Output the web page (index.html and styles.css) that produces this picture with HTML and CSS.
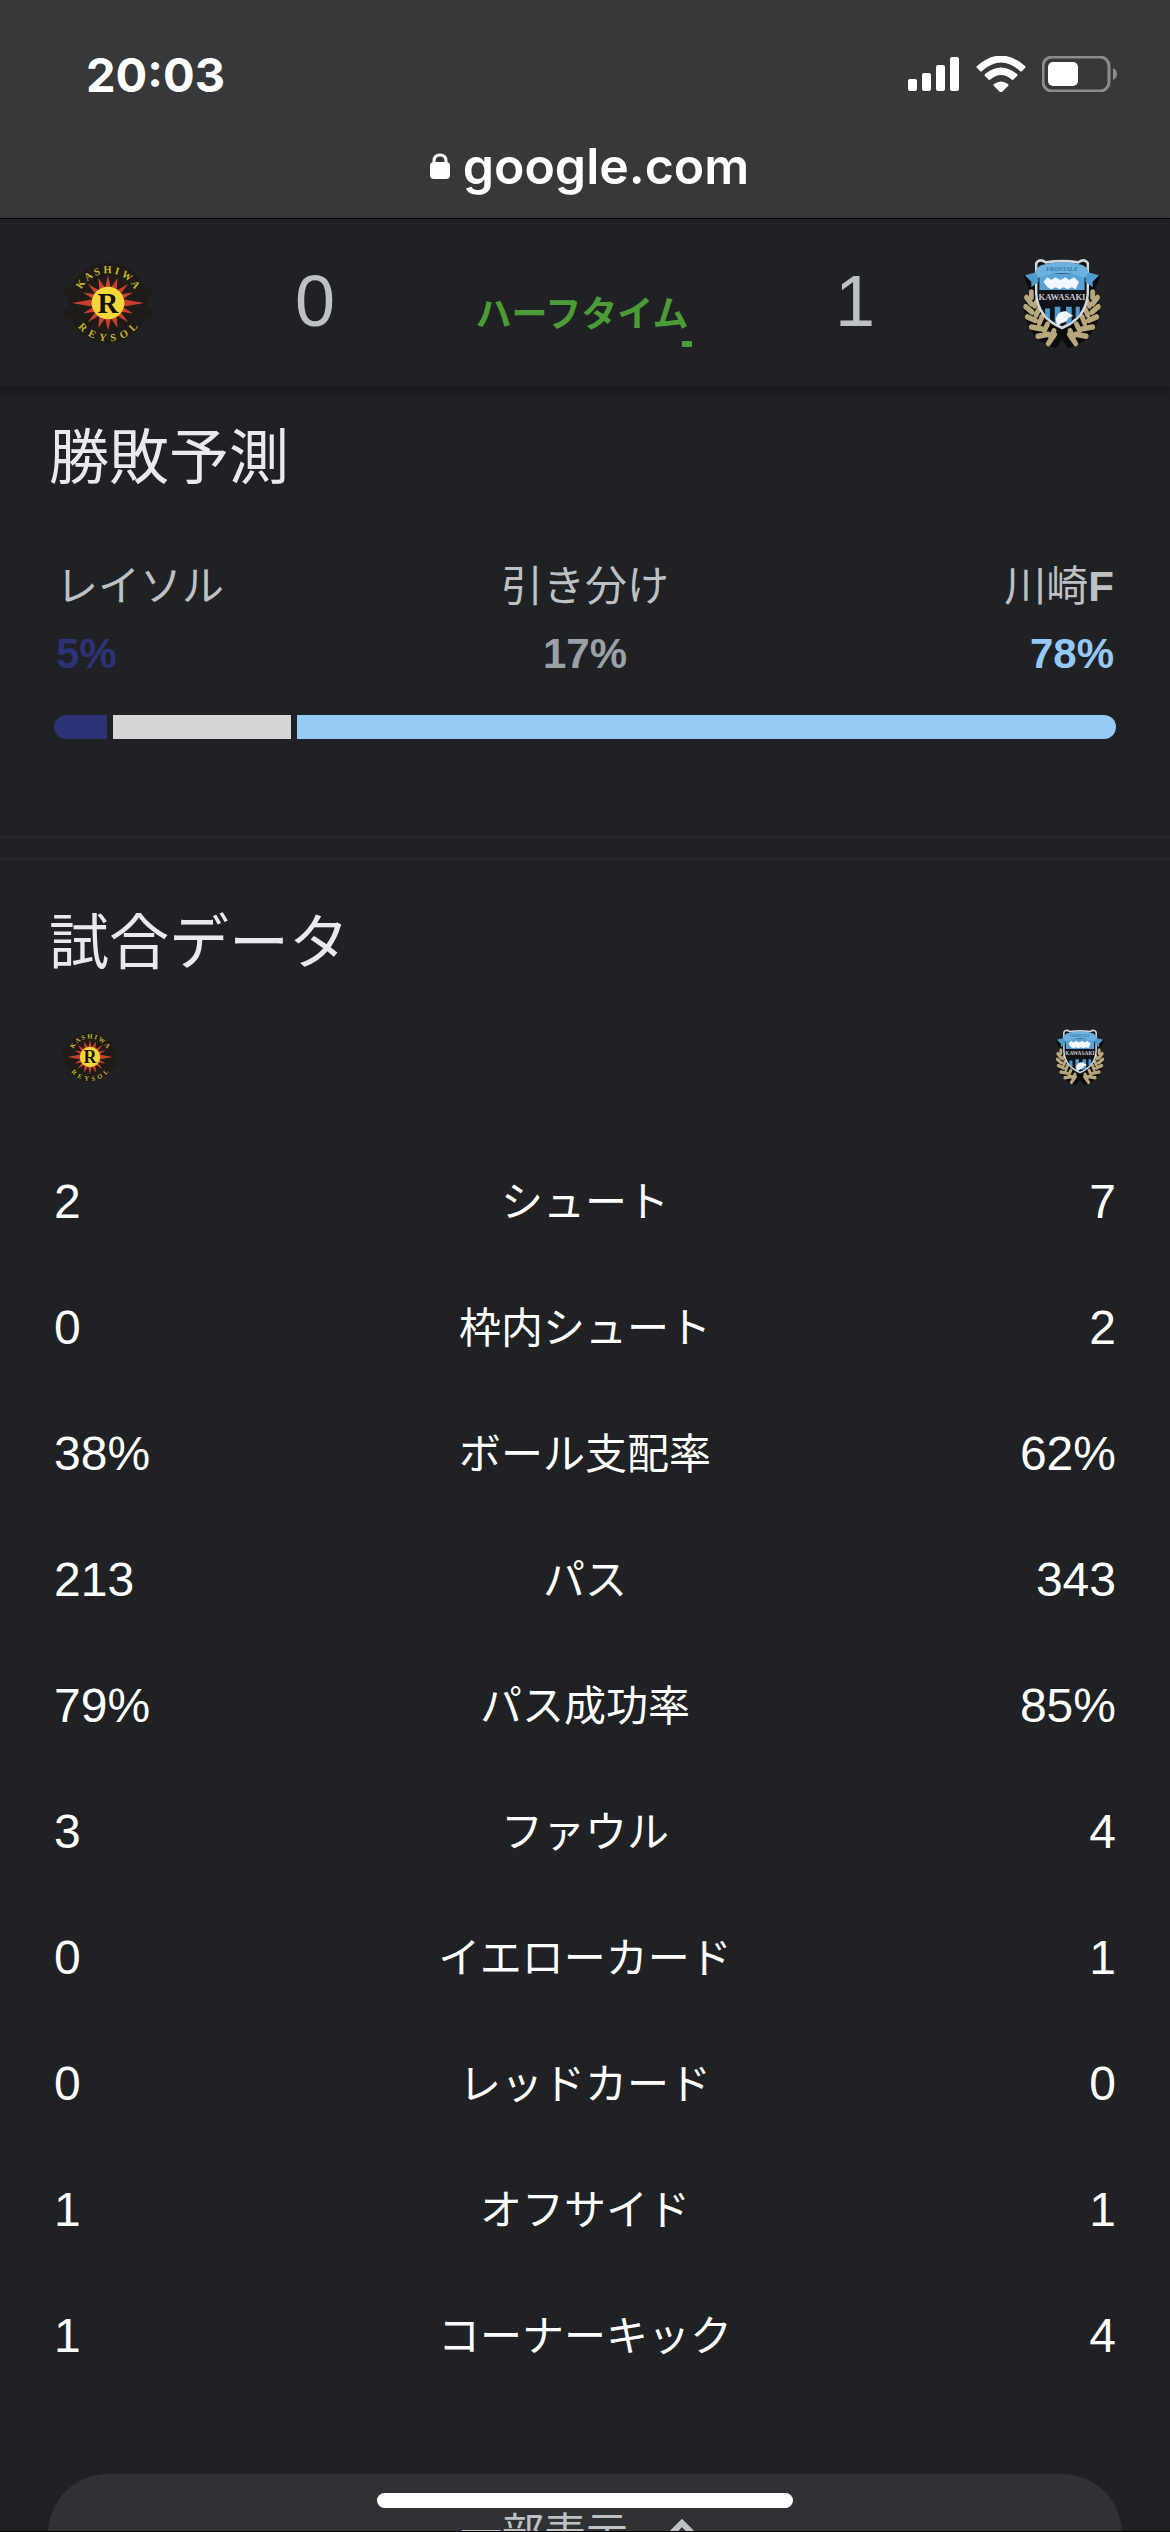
FILE: index.html
```html
<!DOCTYPE html>
<html lang="ja">
<head>
  <meta charset="UTF-8" />
  <meta name="viewport" content="width=device-width, initial-scale=1" />
  <title>柏レイソル 対 川崎F</title>
  <link rel="stylesheet" href="styles.css">
</head>
<body>
  <!-- Crests, reused in both sizes -->
  <svg class="sprite" aria-hidden="true">
    <symbol id="reysol" viewBox="0 0 100 100">
      <circle cx="50" cy="50" r="42" fill="#1e1b19" />
      <path d="M4 34h92v9H4zM4 57h92v9H4z" fill="#1f1b19" />
      <path fill="#c93f2d" d="M12 50L35 46 24 39 37 41 29 30 41 37 40 24 47 34 50 21 53 34 60 24 59 37 71 30 63 41 76 39 65 46 88 50 65 54 76 61 63 59 71 70 59 63 60 76 53 66 50 79 47 66 40 76 41 63 29 70 37 59 24 61 35 54z" />
      <circle cx="50" cy="50" r="17" fill="#f4d83a" />
      <text x="50" y="60" class="crest-r">R</text>
      <path id="arc-top" d="M19 50A31 31 0 0 1 81 50" fill="none" />
      <path id="arc-bottom" d="M10 50A40 40 0 0 0 90 50" fill="none" />
      <text class="crest-ring"><textPath href="#arc-top" startOffset="50%">K A S H I W A</textPath></text>
      <text class="crest-ring"><textPath href="#arc-bottom" startOffset="50%">R  E  Y  S  O  L</textPath></text>
    </symbol>
    <symbol id="frontale" viewBox="0 0 100 100">
      <g transform="translate(8 2) scale(.84 .96)">
        <path d="M18 8Q24 0 34 5Q50 1 66 5Q76 0 82 8L83 18 98 20 92 32 90 40Q102 58 92 74Q82 94 58 99L50 90 42 99Q18 94 8 74Q-2 58 10 40L8 32 2 20 17 18z" fill="#0c0c0e" />
        <g fill="none" stroke="#b8a67c" stroke-width="6" stroke-linecap="round">
          <path d="M12 38L12 44M6 44L12 51M19 48L16 53M5 54L13 60M21 57L18 63M7 65L17 69M25 65L22 72M12 76L24 78M32 73L28 80M20 86L33 84M40 80L36 88M33 94L41 84" />
          <path d="M88 38L88 44M94 44L88 51M81 48L84 53M95 54L87 60M79 57L82 63M93 65L83 69M75 65L78 72M88 76L76 78M68 73L72 80M80 86L67 84M60 80L64 88M67 94L59 84" />
        </g>
        <path d="M18 18L18 7Q22 1 30 6Q50 3 70 6Q78 1 82 7L82 40Q80 66 50 77Q20 66 18 40z" fill="#10141a" stroke="#d5d8db" stroke-width="3" />
        <path d="M22 18h56v18H22z" fill="#57a2d6" />
        <path d="M4 20L20 16 21 27 12 33 12 27zM96 20L80 16 79 27 88 33 88 27z" fill="#4f9bd0" />
        <path d="M17 16Q20 9 29 8Q50 3 71 8Q80 9 83 16L79 23Q50 12 21 23z" fill="#6db2df" />
        <path d="M27 27l5-5 5 3 5-3 6 3 6-3 5 3 6-3 6 5-4 8-5-2-5 2-5-2-5 2-5-2-5 2-5-2z" fill="#f1f7fb" />
        <path d="M29 56h6v12l-6-5zM41 54h7v20l-7-2zM55 54h7v17l-7 2zM67 54h5v8l-5 5z" fill="#4f9bd0" />
        <path d="M42 67Q46 58 55 59L64 64 58 66Q56 71 49 72L44 75z" fill="#f3f6f8" />
      </g>
      <text x="50" y="47" class="crest-name">KAWASAKI</text>
      <text x="50" y="17" class="crest-ribbon">FRONTALE</text>
    </symbol>
  </svg>

  <header class="browser">
    <div class="status-bar">
      <span class="time">20:03</span>
      <div class="status-icons">
        <svg width="52" height="36" viewBox="0 0 52 36" fill="#fff" aria-hidden="true">
          <rect x="0" y="23" width="9" height="12" rx="2" />
          <rect x="14" y="17" width="9" height="18" rx="2" />
          <rect x="28" y="9" width="9" height="26" rx="2" />
          <rect x="42" y="1" width="9" height="34" rx="2" />
        </svg>
        <svg width="50" height="36" viewBox="0 0 50 36" fill="#fff" aria-hidden="true">
          <path d="M1 10Q25-11 49 10Q50 11 49 12L46 15Q45 16 44 15Q25-2 6 15Q5 16 4 15L1 12Q0 11 1 10z" />
          <path d="M9 18Q25 5 41 18Q42 19 41 20L37 24Q36 24 35 23Q25 15 15 23Q14 24 13 24L9 20Q8 19 9 18z" />
          <path d="M18 28Q25 23 32 28Q33 29 32 30L26 36Q25 37 24 36L18 30Q17 29 18 28z" />
        </svg>
        <svg width="76" height="36" viewBox="0 0 76 36" aria-hidden="true">
          <rect x="1" y="1" width="66" height="34" rx="9" fill="none" stroke="#8b8c8d" stroke-width="3" />
          <rect x="6" y="6" width="30" height="24" rx="5" fill="#fff" />
          <path d="M71 12Q75 14 75 18Q75 22 71 24z" fill="#8b8c8d" />
        </svg>
      </div>
    </div>
    <div class="address">
      <svg width="22" height="26" viewBox="0 0 22 26" aria-hidden="true">
        <rect x="1" y="9" width="20" height="17" rx="4" fill="#fff" />
        <path d="M5 11V8Q5 2 11 2Q17 2 17 8V11" fill="none" stroke="#fff" stroke-width="3" />
      </svg>
      <span>google.com</span>
    </div>
  </header>

  <div class="scoreboard">
    <svg class="crest" role="img" aria-label="レイソル"><use href="#reysol" /></svg>
    <span class="score">0</span>
    <span class="match-state">ハーフタイム</span>
    <span class="score">1</span>
    <svg class="crest" role="img" aria-label="川崎F"><use href="#frontale" /></svg>
  </div>

  <main>
    <section class="prediction">
      <h2>勝敗予測</h2>
      <div class="odds">
        <div class="odd home">
          <span class="odd-name">レイソル</span>
          <span class="odd-value">5%</span>
        </div>
        <div class="odd draw">
          <span class="odd-name">引き分け</span>
          <span class="odd-value">17%</span>
        </div>
        <div class="odd away">
          <span class="odd-name">川崎<b>F</b></span>
          <span class="odd-value">78%</span>
        </div>
      </div>
      <div class="odds-bar">
        <div class="segment home" style="flex-grow: 5"></div>
        <div class="segment draw" style="flex-grow: 17"></div>
        <div class="segment away" style="flex-grow: 78"></div>
      </div>
    </section>

    <div class="divider"></div>

    <section class="stats">
      <h2>試合データ</h2>
      <table class="stats-table">
        <thead>
          <tr>
            <th><svg class="crest-small" role="img" aria-label="レイソル"><use href="#reysol" /></svg></th>
            <td></td>
            <th><svg class="crest-small" role="img" aria-label="川崎F"><use href="#frontale" /></svg></th>
          </tr>
        </thead>
        <tbody>
          <tr><td>2</td><th>シュート</th><td>7</td></tr>
          <tr><td>0</td><th>枠内シュート</th><td>2</td></tr>
          <tr><td>38%</td><th>ボール支配率</th><td>62%</td></tr>
          <tr><td>213</td><th>パス</th><td>343</td></tr>
          <tr><td>79%</td><th>パス成功率</th><td>85%</td></tr>
          <tr><td>3</td><th>ファウル</th><td>4</td></tr>
          <tr><td>0</td><th>イエローカード</th><td>1</td></tr>
          <tr><td>0</td><th>レッドカード</th><td>0</td></tr>
          <tr><td>1</td><th>オフサイド</th><td>1</td></tr>
          <tr><td>1</td><th>コーナーキック</th><td>4</td></tr>
        </tbody>
      </table>
      <button type="button" class="btn-less">
        一部表示
        <svg width="36" height="20" viewBox="0 0 36 20" aria-hidden="true">
          <path d="M3 19L18 4 33 19" fill="none" stroke="#bdc1c6" stroke-width="6" />
        </svg>
      </button>
    </section>
  </main>

  <div class="home-indicator"></div>
</body>
</html>
```
FILE: styles.css
```css
* {
  box-sizing: border-box;
  margin: 0;
  padding: 0;
}

body {
  height: 100vh;
  overflow: hidden;
  background-color: #202124;
  color: #fff;
  font-family: "Liberation Sans", "Noto Sans CJK JP", sans-serif;
  border-bottom: 1px solid #000;
}

.sprite {
  display: none;
}

/* Browser chrome */
.browser {
  background-color: #37383a;
  border-bottom: 1px solid #000;
  font-family: Inter, sans-serif;
  font-weight: 600;
}

.status-bar {
  display: flex;
  justify-content: space-between;
  align-items: center;
  height: 124px;
  padding: 24px 52px 0 86px;
}

.time {
  font-size: 47px;
  font-weight: 700;
}

.status-icons {
  display: flex;
  align-items: center;
  gap: 16px;
}

.address {
  display: flex;
  justify-content: center;
  align-items: center;
  gap: 12px;
  height: 94px;
  padding: 0 0 10px 8px;
  font-size: 50px;
}

/* Score header */
.scoreboard {
  display: grid;
  grid-template-columns: 96px 1fr 222px 1fr 96px;
  align-items: center;
  justify-items: center;
  height: 167px;
  padding: 0 60px;
  box-shadow: 0 6px 12px rgba(0, 0, 0, 0.3);
}

.crest {
  width: 96px;
  height: 96px;
}

.score {
  font-size: 72px;
  color: #bdc1c6;
  padding-bottom: 4px;
}

.match-state {
  position: relative;
  font-size: 36px;
  font-weight: bold;
  color: #4b9c36;
  padding: 16px 6px 0 0;
  white-space: nowrap;
}

.match-state::after {
  content: "";
  position: absolute;
  right: 3px;
  bottom: -10px;
  width: 10px;
  height: 6px;
  background-color: #4b9c36;
}

.crest-r {
  font: bold 30px "Liberation Serif", serif;
  text-anchor: middle;
  fill: #17140f;
}

.crest-ring {
  font: bold 11px "Liberation Serif", serif;
  text-anchor: middle;
  white-space: pre;
  fill: #c4b62c;
}

.crest-name {
  font: bold 9px "Liberation Serif", serif;
  text-anchor: middle;
  fill: #c9cbcd;
}

.crest-ribbon {
  font: bold 6px "Liberation Serif", serif;
  text-anchor: middle;
  fill: #3778a6;
}

/* Sections */
h2 {
  font-size: 60px;
  font-weight: 400;
  line-height: 80px;
  color: #e8eaed;
}

.prediction {
  padding: 33px 54px 97px;
}

.prediction h2,
.stats h2 {
  margin-left: -5px;
}

.odds {
  display: grid;
  grid-template-columns: repeat(3, 1fr);
  margin: 54px 2px 28px;
}

.odd {
  display: flex;
  flex-direction: column;
  font-size: 42px;
  line-height: 67px;
}

.odd-name {
  color: #bdc1c6;
}

.odd-name b,
.odd-value {
  font-weight: bold;
}

.odd.home {
  color: #2c3275;
}

.odd.draw {
  color: #9aa0a6;
  text-align: center;
}

.odd.away {
  color: #93c9f4;
  text-align: right;
}

.odds-bar {
  display: flex;
  gap: 6px;
  height: 24px;
  border-radius: 12px;
  overflow: hidden;
}

.segment {
  flex-basis: 0;
}

.segment.home {
  background-color: #2c3275;
}

.segment.draw {
  background-color: #d6d6d6;
}

.segment.away {
  background-color: #96cbf5;
}

.divider {
  height: 24px;
  border-top: 3px solid #26272b;
  border-bottom: 3px solid #26272b;
}

.stats {
  padding: 44px 54px;
}

/* Stats table */
.stats-table {
  width: 100%;
  table-layout: fixed;
  border-collapse: collapse;
}

.stats-table thead tr {
  height: 155px;
}

.stats-table thead th {
  padding: 0 6px;
  vertical-align: middle;
}

.stats-table tbody tr {
  height: 126px;
}

.stats-table td {
  font-size: 48px;
  text-align: left;
  padding-bottom: 2px;
}

.stats-table th {
  font-size: 42px;
  font-weight: 400;
  text-align: center;
}

.stats-table tbody th {
  padding-bottom: 8px;
}

.stats-table th:first-child {
  text-align: left;
}

.stats-table th:last-child,
.stats-table td:last-child {
  text-align: right;
}

.crest-small {
  width: 60px;
  height: 60px;
}

.btn-less {
  display: flex;
  justify-content: center;
  align-items: center;
  gap: 36px;
  width: calc(100% + 12px);
  height: 120px;
  margin: 75px -6px 0;
  padding: 0 10px 10px 0;
  border: none;
  border-radius: 60px;
  background-color: #303134;
  color: #bdc1c6;
  font-family: inherit;
  font-size: 42px;
}

.home-indicator {
  position: fixed;
  left: 50%;
  bottom: 24px;
  width: 416px;
  height: 15px;
  margin-left: -208px;
  border-radius: 8px;
  background-color: #fff;
}
```
